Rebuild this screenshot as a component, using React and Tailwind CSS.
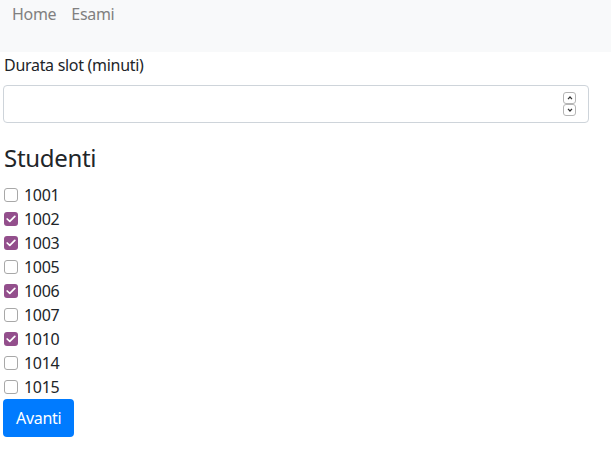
import React from "react";

const students = [
  { id: "1001", checked: false },
  { id: "1002", checked: true },
  { id: "1003", checked: true },
  { id: "1005", checked: false },
  { id: "1006", checked: true },
  { id: "1007", checked: false },
  { id: "1010", checked: true },
  { id: "1014", checked: false },
  { id: "1015", checked: false },
];

function Box({ checked }) {
  if (checked) {
    return (
      <span className="w-[14px] h-[14px] rounded-[3px] bg-[#934f8c] flex items-center justify-center shrink-0">
        <svg width="10" height="8" viewBox="0 0 10 8" fill="none">
          <path d="M1.2 4L3.8 6.4L8.8 1.4" stroke="white" strokeWidth="1.7" strokeLinecap="round" strokeLinejoin="round" />
        </svg>
      </span>
    );
  }
  return <span className="w-[14px] h-[14px] rounded-[3px] border border-[#a8a8a8] bg-white shrink-0" />;
}

function Spin({ up }) {
  return (
    <span className="w-[13px] h-[12px] rounded-[3px] border border-[#b5b5b5] flex items-center justify-center">
      <svg width="6" height="4" viewBox="0 0 6 4" fill="none">
        <path d={up ? "M1 3.2L3 1L5 3.2" : "M1 0.8L3 3L5 0.8"} stroke="#333" strokeWidth="1.2" />
      </svg>
    </span>
  );
}

export default function App() {
  return (
    <div className="min-h-screen bg-white text-[#212529] tracking-[-0.3px]" style={{ fontFamily: "'Noto Sans', 'Open Sans', sans-serif" }}>
      <nav className="bg-[#f8f9fa] h-[52px] flex items-start gap-[15px] px-[12px] pt-[2px] text-[16px] text-[#808080]">
        <span>Home</span>
        <span>Esami</span>
      </nav>

      <div className="px-[3px]">
        <div className="pt-[1px] pl-[1px] text-[16px] leading-6">Durata slot (minuti)</div>
        <div className="mt-[8px] w-[586px] h-[38px] border border-[#ced4da] rounded-[4px] flex items-center justify-end pr-[12px]">
          <div className="flex flex-col">
            <Spin up />
            <Spin />
          </div>
        </div>

        <h3 className="mt-[19px] pl-[1px] text-[24px] leading-[32px] font-normal">Studenti</h3>

        <div className="mt-[9px] flex flex-col">
          {students.map((s) => (
            <label key={s.id} className="flex items-center gap-[6px] h-[24px] pl-[1px] text-[16px]">
              <Box checked={s.checked} />
              <span>{s.id}</span>
            </label>
          ))}
        </div>

        <button className="h-[38px] px-[13px] rounded-[4px] bg-[#007bff] text-white text-[16px]">Avanti</button>
      </div>
    </div>
  );
}
